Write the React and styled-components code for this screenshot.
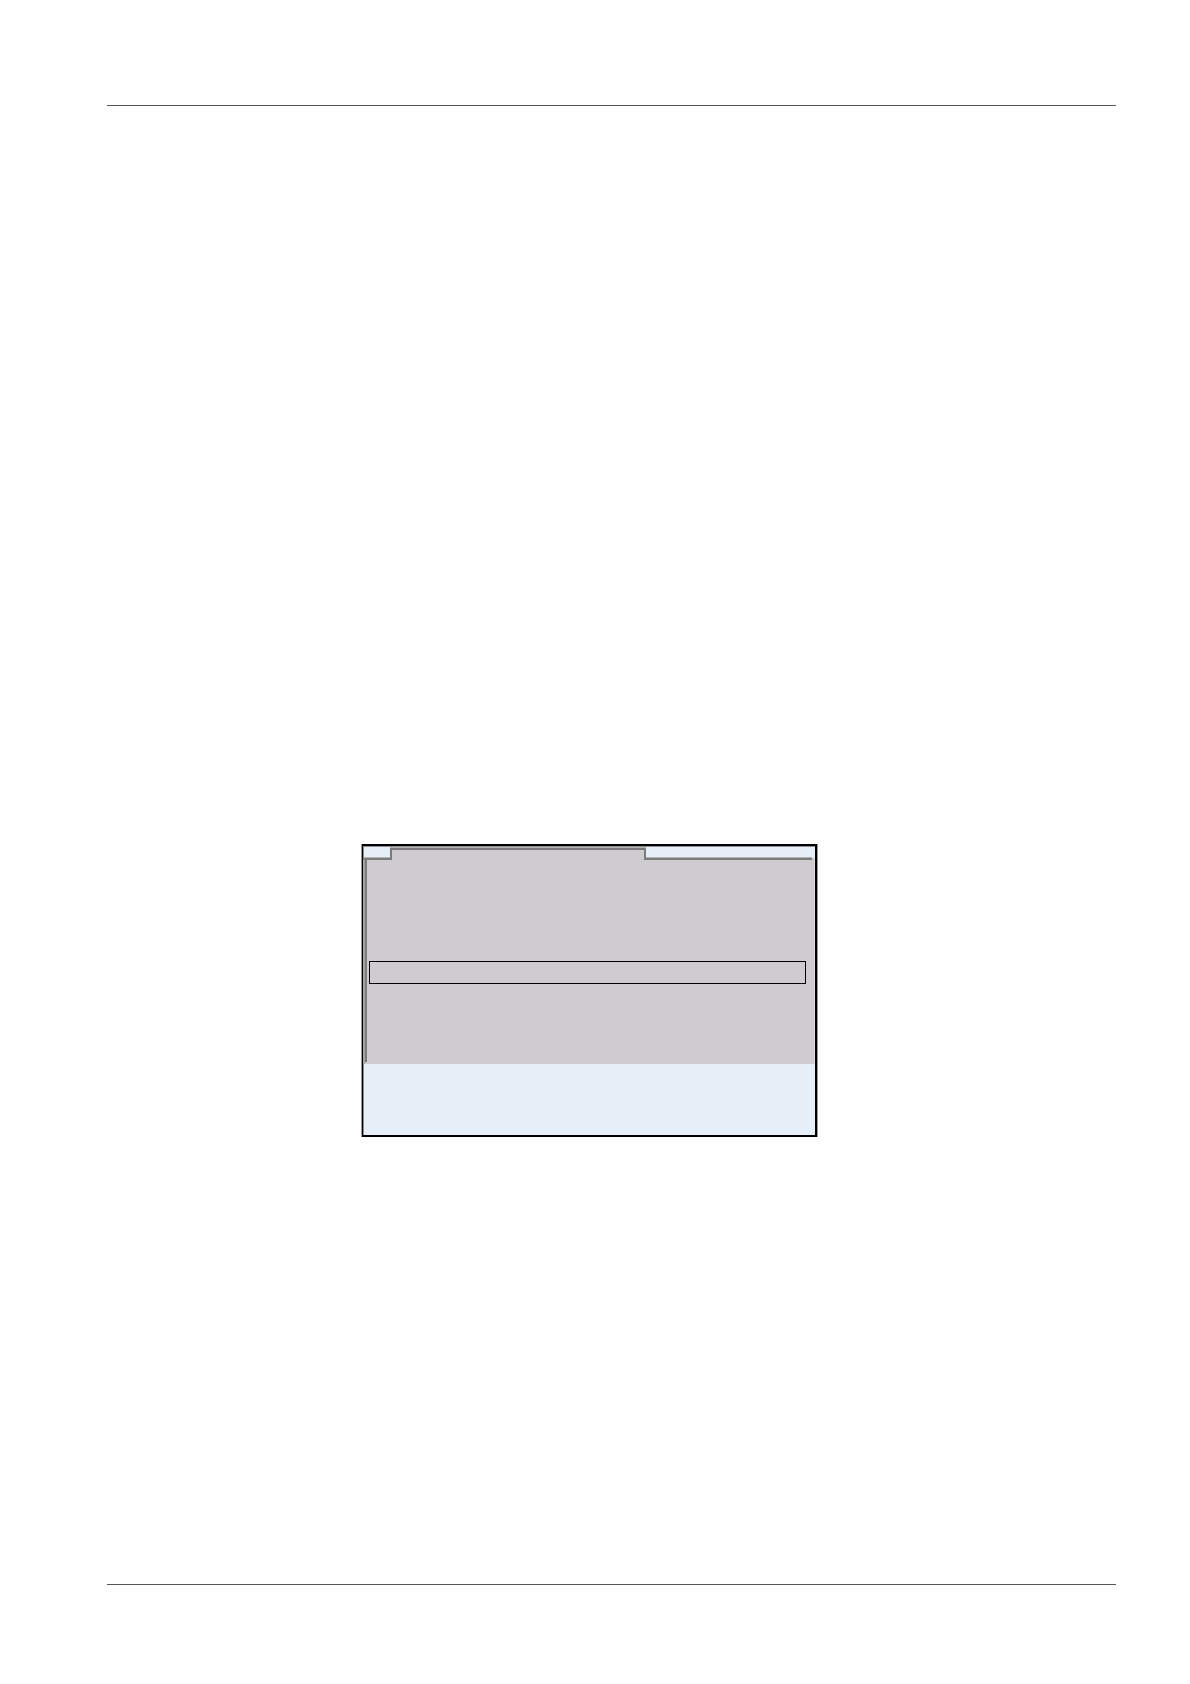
import React from 'react'
import styled, { createGlobalStyle } from 'styled-components'

const App = () => {
  return (
    <>
      <GlobalStyle />
      <Page>
        <Rule />
        <Main>
          <Screen>
            <TabBar>
              <Shoulder $first />
              <Tab />
              <Shoulder />
              <End />
            </TabBar>
            <Panel>
              <Field type="text" aria-label="Selected row" />
            </Panel>
            <Status />
          </Screen>
        </Main>
        <Rule />
      </Page>
    </>
  )
}

export default App

const GlobalStyle = createGlobalStyle`
  * {
    box-sizing: border-box;
  }
  body {
    margin: 0;
    background: #fefefe;
    font-family: "Liberation Sans", sans-serif;
  }
`
const Page = styled.div`
  display: flex;
  flex-direction: column;
  min-height: 100vh;
  padding: 105px 74px 99px 107px;
`
const Rule = styled.hr`
  width: 100%;
  height: 1px;
  margin: 0;
  border: none;
  background: #555555;
`
const Main = styled.main`
  flex: 1;
  padding: 738px 0 80px 255px;
`
const Screen = styled.section`
  display: flex;
  flex-direction: column;
  width: 100%;
  max-width: 455px;
  border: 2px solid #000000;
  border-left-width: 1px;
  background: #e6eef8;
  box-shadow: -1px 0 #9a9a9a, 1px 0 #9a9a9a;
`
const TabBar = styled.div`
  display: flex;
  height: 14px;
  border-top: 1px solid #8e8e8e;
  border-left: 1px solid #8e8e8e;
`
const Shoulder = styled.div`
  flex: ${props => props.$first ? '0 0 26px' : '1'};
  border-bottom: 2px solid #7b7b7b;
  box-shadow: inset 0 -1px #b4b4b6;
`
const Tab = styled.div`
  flex: 0 1 256px;
  border: 2px solid #7b7b7b;
  border-bottom: none;
  background: #cfcccf;
  box-shadow: 0 -1px #b4b4b6;
  margin-top: 1px;
`
const End = styled.div`
  flex: 0 0 3px;
  border-bottom: 2px solid #cfcccf;
`
const Panel = styled.div`
  height: 204px;
  padding: 101px 8px 0 4px;
  border-left: 2px solid #a3a3a3;
  border-right: 1px solid #dedde1;
  background: #cfcccf;
  box-shadow: inset 0 -2px #cfcccf, inset 2px 0 #7b7b7b;
`
const Field = styled.input`
  display: block;
  width: 100%;
  height: 23px;
  padding: 0 4px;
  border: 1px solid #000000;
  border-radius: 0;
  background: transparent;
  font-family: inherit;
  font-size: 14px;
  outline: none;
`
const Status = styled.footer`
  height: 71px;
  border-left: 1px solid #8e8e8e;
`
